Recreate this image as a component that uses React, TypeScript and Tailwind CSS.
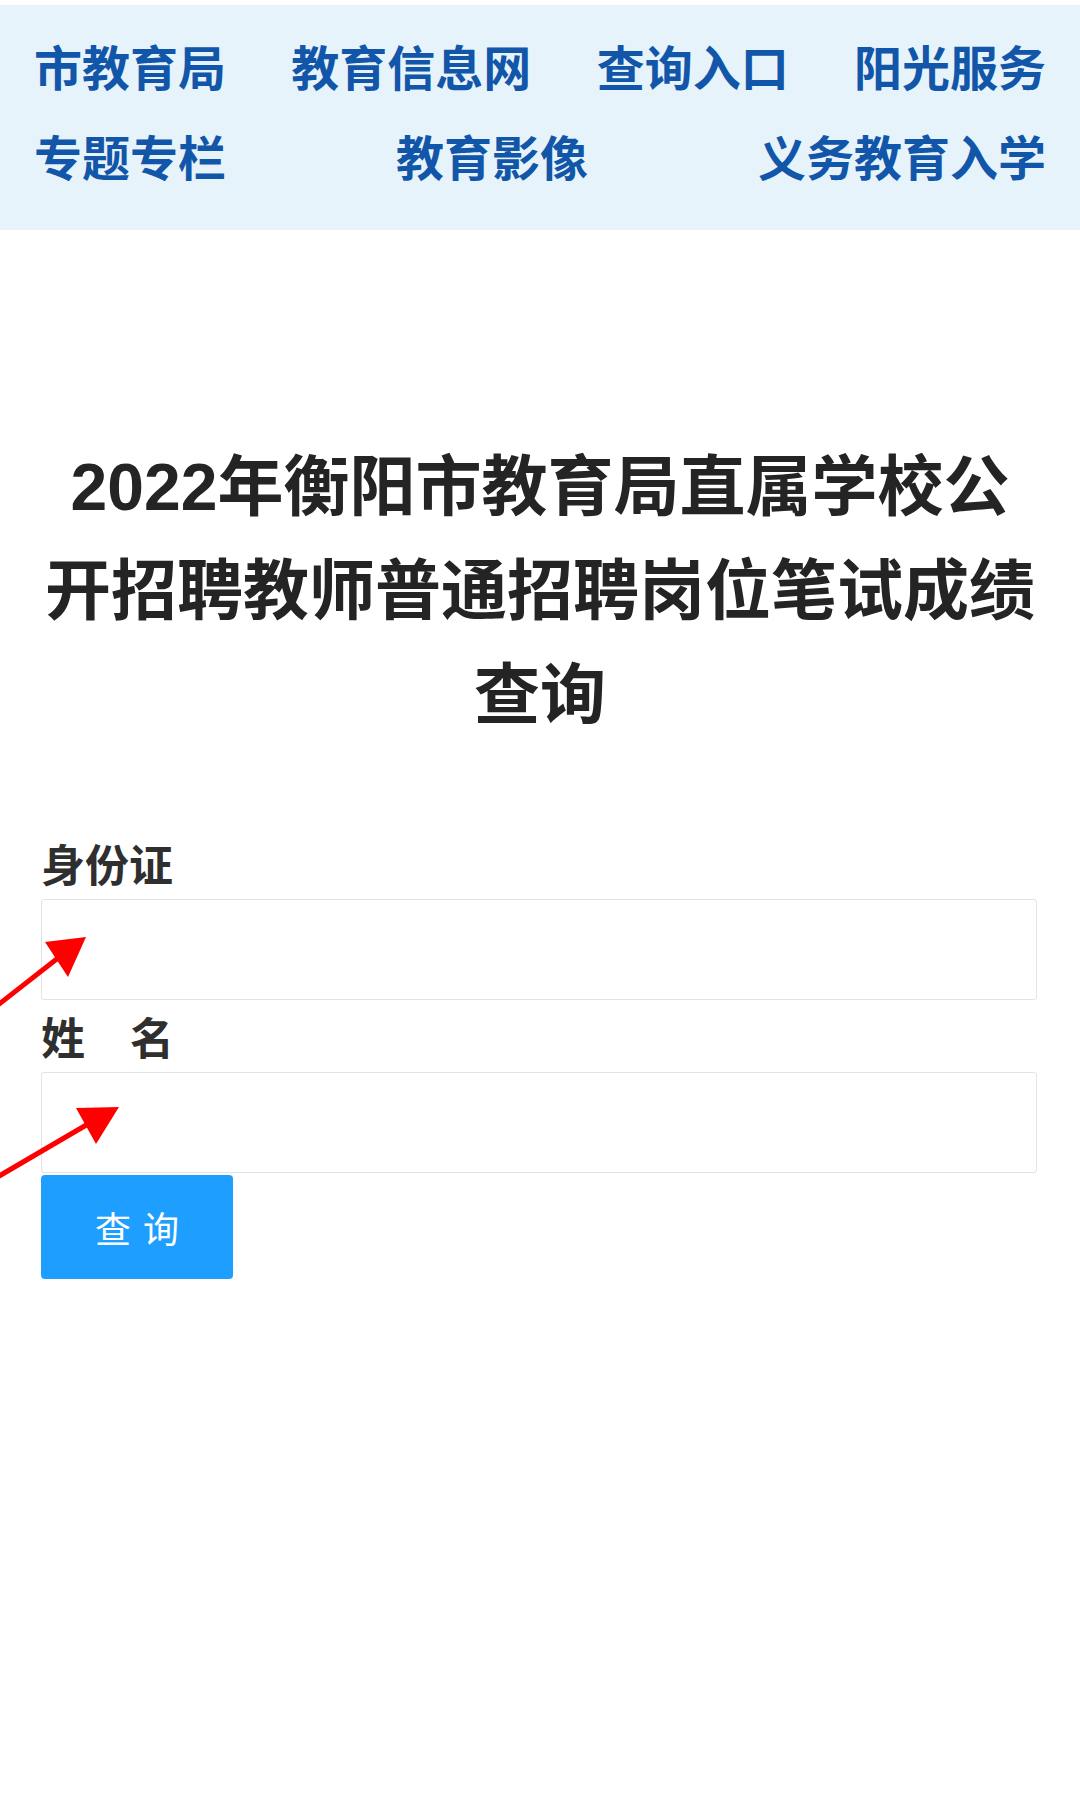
import React from "react";

const cjk = { fontFamily: '"Noto Sans CJK SC", "Noto Sans", sans-serif' };
const titleFont = { fontFamily: '"Liberation Sans", "Noto Sans CJK SC", sans-serif' };

function NavRow({ items }: { items: string[] }) {
  return (
    <div className="flex h-[90px] items-center justify-between">
      {items.map((t) => (
        <span key={t} className="text-[48px] font-bold leading-none text-[#1156a8]">
          {t}
        </span>
      ))}
    </div>
  );
}

export default function App() {
  return (
    <div className="relative min-h-[1812px] w-[1080px] bg-white" style={cjk}>
      <div className="mt-[5px] bg-[#e7f3fa] pl-[34px] pr-[34px] pt-[15px] pb-[30px]">
        <NavRow items={["市教育局", "教育信息网", "查询入口", "阳光服务"]} />
        <NavRow items={["专题专栏", "教育影像", "义务教育入学"]} />
      </div>

      <h1
        className="mt-[205px] px-[36px] text-center text-[66px] font-bold leading-[104px] text-[#242424]"
        style={titleFont}
      >
        2022年衡阳市教育局直属学校公
        <br />
        开招聘教师普通招聘岗位笔试成绩
        <br />
        查询
      </h1>

      <form className="mt-[80px] pl-[41px] pr-[43px]" onSubmit={(e) => e.preventDefault()}>
        <div className="flex h-[72px] items-center text-[44px] font-bold leading-none text-[#2f2f2f]">
          身份证
        </div>
        <input
          type="text"
          className="block h-[101px] w-full rounded-[3px] border border-[#e3e3e3] bg-white outline-none"
        />
        <div className="flex h-[72px] items-center gap-[45px] text-[44px] font-bold leading-none text-[#2f2f2f]">
          <span>姓</span>
          <span>名</span>
        </div>
        <input
          type="text"
          className="block h-[101px] w-full rounded-[3px] border border-[#e3e3e3] bg-white outline-none"
        />
        <button
          type="submit"
          className="mt-[2px] flex h-[104px] w-[192px] items-center justify-center gap-[12px] rounded-[4px] bg-[#1e9fff] text-[36px] font-normal leading-none text-white"
        >
          <span>查</span>
          <span>询</span>
        </button>
      </form>

      <svg
        className="pointer-events-none absolute left-0 top-0"
        width="1080"
        height="1812"
        viewBox="0 0 1080 1812"
      >
        <line x1="-6" y1="1003" x2="58" y2="953" stroke="#ff0000" strokeWidth="5" />
        <polygon points="86,932 45,937 68,972" fill="#ff0000" />
        <line x1="-6" y1="1174" x2="88" y2="1119" stroke="#ff0000" strokeWidth="5" />
        <polygon points="119,1102 76,1103 96,1139" fill="#ff0000" />
      </svg>
    </div>
  );
}
